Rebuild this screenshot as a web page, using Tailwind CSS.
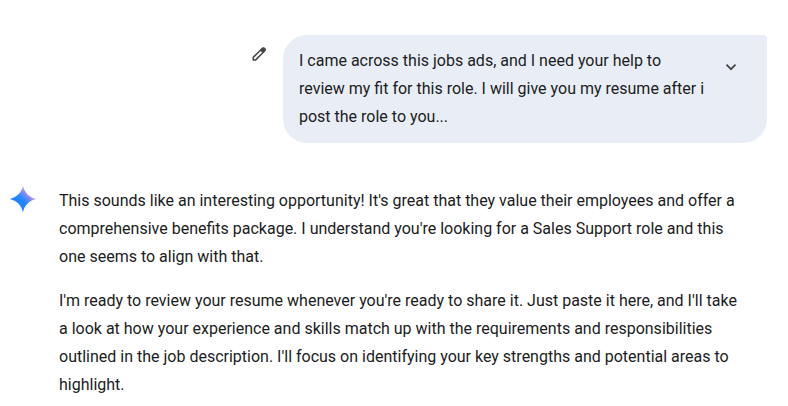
<!DOCTYPE html>
<html lang="en">
<head>
  <meta charset="UTF-8">
  <meta name="viewport" content="width=device-width, initial-scale=1.0">
  <title>Chat</title>
  <script src="https://cdn.jsdelivr.net/npm/@tailwindcss/browser@4"></script>
</head>
<body class="bg-white font-['Roboto','Liberation_Sans',sans-serif] text-base leading-7 text-[#1b1c1d]">
  <main class="pt-[35px] pr-[21px] pl-2">
    <!-- User prompt -->
    <section class="flex items-start justify-end gap-[14px]">
      <button type="button" aria-label="Edit prompt" class="mt-[9px] size-5 shrink-0 text-[#444746]">
        <svg viewBox="0 0 20 20" class="size-5">
          <path fill="none" stroke="currentColor" stroke-width="1.5" stroke-linejoin="round" d="M4.200 15.900v-2.500l9.200-9.100a1.400 1.400 0 0 1 2 0l.4.4a1.400 1.400 0 0 1 0 2l-9.100 9.200Z"/>
          <path fill="currentColor" d="M11 6.500 13.400 4.100a1.500 1.500 0 0 1 2.100 0l.5.5a1.500 1.500 0 0 1 0 2.100L13.600 9.100Z"/>
        </svg>
      </button>
      <div class="flex w-full max-w-[484px] items-start justify-between rounded-3xl rounded-tr-sm bg-[#e9eef6] py-3 pr-[26px] pl-4">
        <p>
          I came across this jobs ads, and I need your help to<br>
          review my fit for this role. I will give you my resume after i<br>
          post the role to you...
        </p>
        <button type="button" aria-label="Expand text" class="mt-[10px] size-5 shrink-0 text-[#444746]">
          <svg viewBox="0 0 20 20" fill="none" stroke="currentColor" stroke-width="1.800" class="size-5">
            <path d="M5.500 7.700 10 12.200l4.500-4.500"/>
          </svg>
        </button>
      </div>
    </section>

    <!-- Model response -->
    <section class="mt-11 flex items-start gap-5">
      <svg viewBox="0 0 28 28" class="-mt-px size-7 shrink-0" aria-hidden="true">
        <defs>
          <linearGradient id="spark" x1="6" y1="22" x2="22" y2="5" gradientUnits="userSpaceOnUse">
            <stop offset="0" stop-color="#1c7dff"/>
            <stop offset=".5" stop-color="#1f88ff"/>
            <stop offset=".75" stop-color="#8088fa"/>
            <stop offset="1" stop-color="#d5b5f5"/>
          </linearGradient>
        </defs>
        <path fill="url(#spark)" d="M15-.4c1.300 6.900 6.500 12.100 13.400 13.400-6.900 1.300-12.100 6.500-13.400 13.400C13.700 19.500 8.500 14.300 1.600 13 8.500 11.700 13.700 6.500 15-.4Z"/>
      </svg>
      <div class="flex flex-col gap-4 pl-[3px]">
        <p>
          This sounds like an interesting opportunity! It's great that they value their employees and offer a<br>
          comprehensive benefits package. I understand you're looking for a Sales Support role and this<br>
          one seems to align with that.
        </p>
        <p>
          I'm ready to review your resume whenever you're ready to share it. Just paste it here, and I'll take<br>
          a look at how your experience and skills match up with the requirements and responsibilities<br>
          outlined in the job description. I'll focus on identifying your key strengths and potential areas to<br>
          highlight.
        </p>
      </div>
    </section>
  </main>
</body>
</html>
